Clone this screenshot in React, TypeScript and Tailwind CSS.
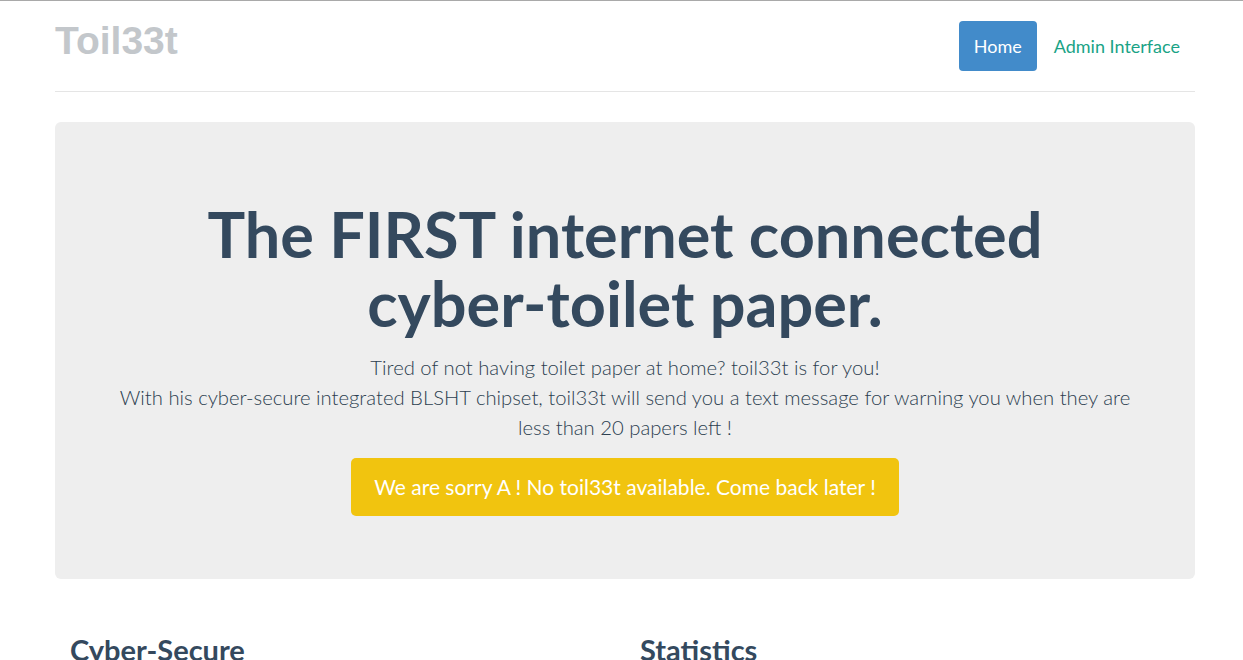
export default function App() {
  return (
    <div className="min-h-screen bg-white border-t border-[#a9a9a9] font-['Lato',sans-serif] text-[#2c3e50]">
      <div className="w-[1140px] ml-[55px]">
        {/* Header */}
        <header className="h-[91px] flex justify-between items-start border-b border-[#e5e5e5]">
          <h3 className="pt-[16px] text-[39px] leading-[48px] font-bold text-[#c3c7cb] font-['Liberation_Sans',Arial,sans-serif]">
            Toil33t
          </h3>
          <nav className="pt-[20px] flex gap-[2px]">
            <a className="h-[50px] px-[15px] flex items-center rounded-[4px] bg-[#428bca] text-white text-[18px]">
              Home
            </a>
            <a className="h-[50px] px-[15px] flex items-center text-[#1aa386] text-[18px]">
              Admin Interface
            </a>
          </nav>
        </header>

        {/* Jumbotron */}
        <section className="mt-[30px] h-[457px] rounded-[6px] bg-[#eeeeee] px-[60px] pt-[77px] text-center">
          <h1 className="text-[63px] leading-[69px] font-bold text-[#34495e]">
            The FIRST internet connected
            <br />
            cyber-toilet paper.
          </h1>
          <p className="mt-[15px] text-[20.25px] leading-[30px] font-light text-[#2c3e50]">
            Tired of not having toilet paper at home? toil33t is for you!
            <br />
            With his cyber-secure integrated BLSHT chipset, toil33t will send you a text message for warning you when they are less than 20 papers left !
          </p>
          <div className="mt-[16px] flex justify-center">
            <a className="h-[58px] px-[23px] flex items-center rounded-[5px] bg-[#f1c40f] text-white text-[21px]">
              We are sorry A ! No toil33t available. Come back later !
            </a>
          </div>
        </section>

        {/* Features */}
        <div className="grid grid-cols-2 mt-[54px]">
          <div className="px-[15px]">
            <h2 className="text-[29px] leading-[33px] font-bold text-[#34495e]">Cyber-Secure</h2>
          </div>
          <div className="px-[15px]">
            <h2 className="text-[29px] leading-[33px] font-bold text-[#34495e]">Statistics</h2>
          </div>
        </div>
      </div>
    </div>
  );
}
